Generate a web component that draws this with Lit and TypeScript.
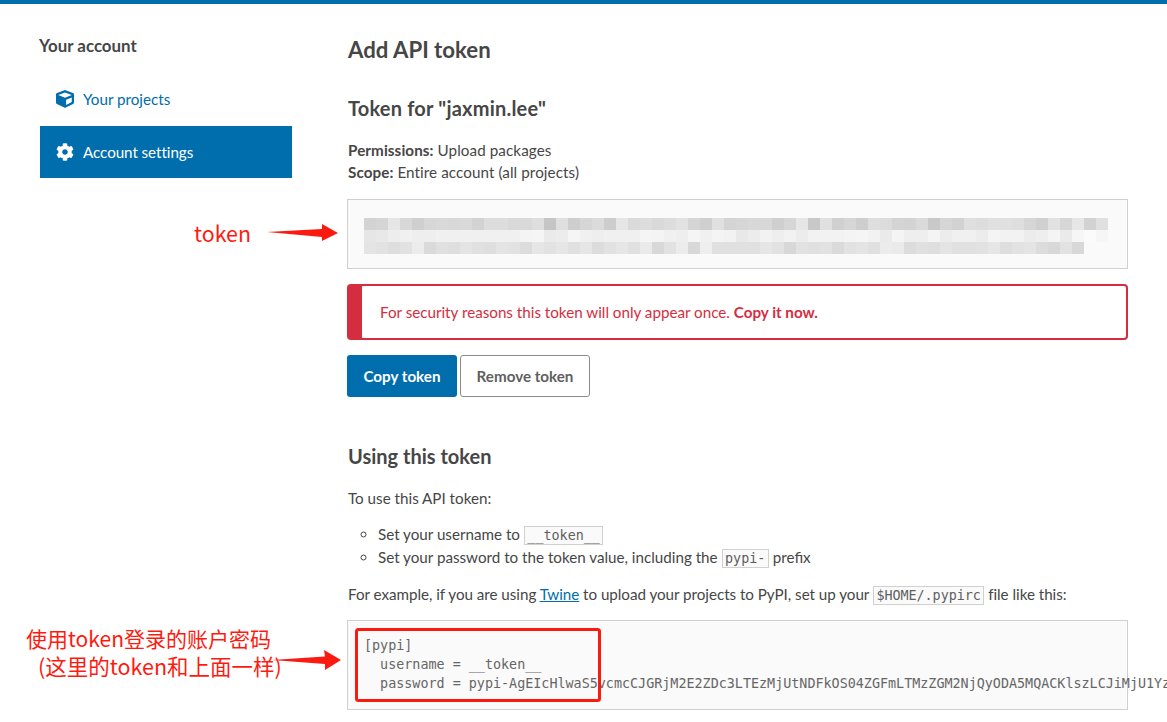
import { LitElement, html, css } from "lit";
import { customElement } from "lit/decorators.js";

const ROWS: string[] = [
  "d3 d5 e6 d8 cf d7 d9 d8 d9 d3 dd dd d9 d9 de c5 df ce d6 db cd e6 da dd d9 dd e2 d5 cf e0 d4 d6 d8 d8 cf d6 e6 c8 e0 d0 d6 ce de dc d4 d3 da c9 d6 d2 df dd e0 e0 de d6 d0 e2 d6 e6 d2 e0",
  "e6 e8 ed f0 ee ee f0 f0 f0 f0 f0 f0 f0 f4 f5 ea ec f5 f0 ee f0 f0 f0 f5 f4 f0 ee f5 f0 f4 f2 e8 ec f2 ee f2 ec f2 f2 f2 f4 f5 f2 ea f4 ee ee f4 ec f0 f0 ec f4 f2 f2 ec ee f4 ea f6 fb f6",
  "e4 e2 de e2 ec da e0 de e4 e0 de e4 e2 dc e6 e2 e6 e0 e6 dc e2 e6 e0 ea d8 e2 ec d8 ee e0 e0 e0 e0 e6 e2 d8 e2 e0 e2 da e2 e4 e0 ec ea dc e0 de e4 e0 e0 e2 e6 de e2 e4 dc d8 e2 d8",
];

@customElement("app-root")
export class AppRoot extends LitElement {
  static styles = css`
    :host {
      display: block;
      position: relative;
      height: 722px;
      overflow: hidden;
      background: #fff;
      color: #464646;
      font-family: Lato, "Noto Sans", sans-serif;
      font-size: 15.2px;
      line-height: 22px;
    }
    .topbar { height: 4px; background: #006dad; }
    .layout { display: flex; align-items: flex-start; padding-left: 40px; }
    .side { width: 252px; flex: none; margin-right: 56px; }
    .side h3 { margin: 31px 0 0 -1px; font-size: 16.9px; line-height: 22px; font-weight: 700; }
    .menu { margin-top: 17px; display: flex; flex-direction: column; }
    .item {
      display: flex; align-items: center; height: 52px; box-sizing: border-box;
      padding: 0 0 2px 16px; gap: 9px; color: #006dad;
    }
    .item svg { width: 18px; height: 18px; fill: currentColor; flex: none; }
    .item.on { background: #006dad; color: #fff; letter-spacing: -0.06px; padding-bottom: 0; }
    .main { width: 780px; flex: none; color: #464646; }
    h1 { margin: 31px 0 0; font-size: 22.2px; line-height: 30px; font-weight: 700; }
    h2 { margin: 0; font-size: 20px; line-height: 26px; font-weight: 700; }
    .h-token { margin-top: 30px; letter-spacing: 0.2px; }
    p { margin: 0; }
    .perms { margin-top: 18px; letter-spacing: 0.09px; }
    .tokenbox {
      margin: 16px 0 0 -1px; height: 70px; box-sizing: border-box;
      border: 1px solid #d0d0d0; background: #fafafa;
      padding: 18px 0 0 16px;
    }
    .row { display: flex; height: 12px; }
    .cell { width: 12px; height: 12px; flex: none; }
    .alert {
      margin: 15px 0 0 -1px; height: 56px; box-sizing: border-box;
      border: 2px solid #d52d40; border-left-width: 15px; border-radius: 4px;
      color: #d52d40; display: flex; align-items: center; padding-left: 18px;
    }
    .btns { display: flex; gap: 3px; margin: 15px 0 0 -1px; }
    .btn {
      height: 42px; box-sizing: border-box; border-radius: 3px; display: flex;
      align-items: center; justify-content: center; font-weight: 700;
    }
    .copy { width: 110px; background: #006dad; color: #fff; }
    .remove { width: 130px; background: #fff; border: 1px solid #8a8a8a; color: #5f5f5f; }
    .h-using { margin-top: 46px; }
    .use { margin-top: 18px; }
    ul { margin: 14px 0 0; padding: 0 0 0 30px; list-style: circle; }
    li { line-height: 23px; }
    code {
      font-family: "DejaVu Sans Mono", monospace; font-size: 13.4px; color: #5f5f5f;
      background: #fafafa; border: 1px solid #d0d0d0; padding: 1px 2.5px; line-height: 16px;
    }
    .eg { margin-top: 14px; letter-spacing: -0.03px; }
    a { color: #006dad; text-decoration: underline; }
    pre {
      margin: 15px 0 0 -1px; height: 90px; box-sizing: border-box; width: 781px;
      border: 1px solid #d0d0d0; background: #fafafa; padding: 15px 16px 0;
      font-family: "DejaVu Sans Mono", monospace; font-size: 13.4px; line-height: 19px;
      color: #666; white-space: pre;
    }
    .note {
      position: absolute; color: #ff1a0f; white-space: nowrap;
      font-family: "Noto Sans CJK SC", sans-serif; line-height: 27px;
    }
    .n-token { left: 194px; top: 218px; font-size: 21.4px; line-height: 30px; }
    .n-a { left: 26px; top: 625px; font-size: 21px; }
    .n-b { left: 38px; top: 652px; font-size: 21.5px; }
    .overlay { position: absolute; left: 0; top: 0; width: 1167px; height: 722px; pointer-events: none; }
    .overlay polygon { fill: #fb1a10; }
    .overlay rect { fill: none; stroke: #fb1a10; stroke-width: 3px; }
  `;

  render() {
    return html`
      <div class="topbar"></div>
      <div class="layout">
        <aside class="side">
          <h3>Your account</h3>
          <nav class="menu">
            <div class="item">
              <svg viewBox="0 0 512 512"><path d="M239.1 6.3l-208 78c-18.7 7-31.1 25-31.1 45v225.1c0 18.2 10.3 34.8 26.5 42.9l208 104c13.5 6.8 29.4 6.8 42.9 0l208-104c16.3-8.1 26.5-24.8 26.5-42.9V129.3c0-20-12.4-37.9-31.1-44.9l-208-78C262 2.2 250 2.2 239.1 6.3zM256 68.4l192 72v1.1l-192 78-192-78v-1.1l192-72zm32 356V275.5l160-65v133.9l-160 80z"/></svg>
              <span>Your projects</span>
            </div>
            <div class="item on">
              <svg viewBox="0 0 512 512"><path d="M487.4 315.7l-42.6-24.6c4.3-23.2 4.3-47 0-70.2l42.6-24.6c4.9-2.8 7.1-8.6 5.5-14-11.1-35.6-30-67.8-54.7-94.6-3.8-4.1-10-5.1-14.8-2.3L380.8 110c-17.9-15.4-38.5-27.3-60.8-35.1V25.8c0-5.6-3.9-10.5-9.4-11.7-36.7-8.2-74.3-7.8-109.2 0-5.5 1.2-9.4 6.1-9.4 11.7V75c-22.2 7.9-42.8 19.8-60.8 35.1L88.7 85.5c-4.9-2.8-11-1.9-14.8 2.3-24.7 26.7-43.6 58.9-54.7 94.6-1.7 5.4.6 11.2 5.5 14L67.3 221c-4.3 23.2-4.3 47 0 70.2l-42.6 24.6c-4.9 2.8-7.1 8.6-5.5 14 11.1 35.6 30 67.8 54.7 94.6 3.8 4.1 10 5.1 14.8 2.3l42.6-24.6c17.9 15.4 38.5 27.3 60.8 35.1v49.2c0 5.6 3.9 10.5 9.4 11.7 36.7 8.2 74.3 7.8 109.2 0 5.5-1.2 9.4-6.1 9.4-11.7v-49.2c22.2-7.9 42.8-19.8 60.8-35.1l42.6 24.6c4.9 2.8 11 1.9 14.8-2.3 24.7-26.7 43.6-58.9 54.7-94.6 1.5-5.5-.7-11.3-5.6-14.1zM256 336c-44.1 0-80-35.9-80-80s35.9-80 80-80 80 35.9 80 80-35.9 80-80 80z"/></svg>
              <span>Account settings</span>
            </div>
          </nav>
        </aside>
        <main class="main">
          <h1>Add API token</h1>
          <h2 class="h-token">Token for "jaxmin.lee"</h2>
          <p class="perms"><b>Permissions:</b> Upload packages<br /><b>Scope:</b> Entire account (all projects)</p>
          <div class="tokenbox">
            ${ROWS.map(
              (r) => html`<div class="row">${r.split(" ").map(
                (v) => html`<span class="cell" style="background:#${v}${v}${v}"></span>`
              )}</div>`
            )}
          </div>
          <div class="alert"><span>For security reasons this token will only appear once. <b>Copy it now.</b></span></div>
          <div class="btns">
            <div class="btn copy">Copy token</div>
            <div class="btn remove">Remove token</div>
          </div>
          <h2 class="h-using">Using this token</h2>
          <p class="use">To use this API token:</p>
          <ul>
            <li>Set your username to <code>__token__</code></li>
            <li>Set your password to the token value, including the <code>pypi-</code> prefix</li>
          </ul>
          <p class="eg">For example, if you are using <a>Twine</a> to upload your projects to PyPI, set up your <code>$HOME/.pypirc</code> file like this:</p>
          <pre>[pypi]
  username = __token__
  password = pypi-AgEIcHlwaS5vcmcCJGRjM2E2ZDc3LTEzMjUtNDFkOS04ZGFmLTMzZGM2NjQyODA5MQACKlszLCJiMjU1YzE</pre>
        </main>
      </div>
      <div class="note n-token">token</div>
      <div class="note n-a">使用token登录的账户密码</div>
      <div class="note n-b">(这里的token和上面一样)</div>
      <svg class="overlay" viewBox="0 0 1167 722">
        <polygon points="267,232 322,229 322,224 338,233 322,241 322,237" />
        <polygon points="272,660 325,656.5 324,650 341,660 325,670 325,664" />
        <rect x="356.5" y="629.5" width="243" height="71" rx="2" />
      </svg>
    `;
  }
}
